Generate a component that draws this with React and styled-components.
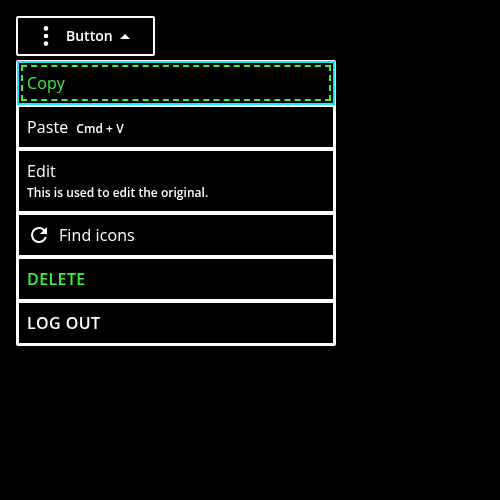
import React from "react";
import styled, { createGlobalStyle, css } from "styled-components";

const GlobalStyle = createGlobalStyle`
  * { box-sizing: border-box; }
  body { margin: 0; background: #000; color: #fff; font-family: "Open Sans", "Noto Sans", sans-serif; }
`;

const Page = styled.main`
  min-height: 100vh;
  padding: 16px;
`;

const Trigger = styled.button`
  display: flex;
  align-items: center;
  width: 139px;
  height: 40px;
  padding: 0 10px 0 16px;
  border: 2px solid #fff;
  border-radius: 2px;
  background: #000;
  color: #fff;
  font: 600 14px/20px "Open Sans", "Noto Sans", sans-serif;
  will-change: transform;
`;

const Icon = styled.svg`
  flex: none;
  width: 24px;
  height: 24px;
  margin-right: 8px;
  fill: #fff;
`;

const Caret = styled.svg`
  width: 10px;
  height: 5px;
  margin-left: 7px;
  fill: #fff;
`;

const Menu = styled.ul`
  width: 320px;
  margin: 4px 0 0;
  padding: 1px;
  border-radius: 2px;
  background: #fff;
  list-style: none;
  will-change: transform;
`;

const Item = styled.li`
  display: flex;
  align-items: center;
  position: relative;
  height: 44px;
  padding: 0 8px;
  border: 2px solid ${(p) => (p.$focused ? "#17e2ff" : "#fff")};
  background: #000;
  font-size: 16px;
  line-height: 24px;
  letter-spacing: 0.1px;
  color: ${(p) => (p.$accent ? "#3ff23f" : "#fff")};

  ${(p) => p.$strong && css`
    font-weight: 600;
    letter-spacing: 0.4px;
  `}

  ${(p) => p.$stacked && css`
    height: 64px;
    flex-direction: column;
    align-items: flex-start;
    justify-content: center;
  `}

  ${(p) => p.$focused && css`
    &::after {
      content: "";
      position: absolute;
      inset: 2px;
      border: 2px dashed #3ff23f;
    }
  `}
`;

const Note = styled.span`
  margin-left: ${(p) => (p.$inline ? "8px" : "0")};
  padding-top: ${(p) => (p.$inline ? "3px" : "0")};
  font-size: 12px;
  line-height: 20px;
  font-weight: 600;
  letter-spacing: 0.03px;
`;

export default function App() {
  return (
    <Page>
      <GlobalStyle />
      <Trigger>
        <Icon viewBox="0 0 24 24" aria-hidden="true">
          <circle cx="12" cy="4.4" r="2.3" />
          <circle cx="12" cy="12" r="2.3" />
          <circle cx="12" cy="19.6" r="2.3" />
        </Icon>
        Button
        <Caret viewBox="0 0 10 5" aria-hidden="true"><path d="M0 5 5 0l5 5z" /></Caret>
      </Trigger>
      <Menu>
        <Item $accent $focused>Copy</Item>
        <Item>Paste<Note $inline>Cmd + V</Note></Item>
        <Item $stacked>Edit<Note>This is used to edit the original.</Note></Item>
        <Item>
          <Icon viewBox="0 0 24 24" aria-hidden="true">
            <path d="M17.65 6.35A7.96 7.96 0 0 0 12 4a8 8 0 1 0 7.73 10h-2.08A6 6 0 1 1 12 6c1.66 0 3.14.69 4.22 1.78L13 11h7V4z" />
          </Icon>
          Find icons
        </Item>
        <Item $accent $strong>DELETE</Item>
        <Item $strong>LOG OUT</Item>
      </Menu>
    </Page>
  );
}
